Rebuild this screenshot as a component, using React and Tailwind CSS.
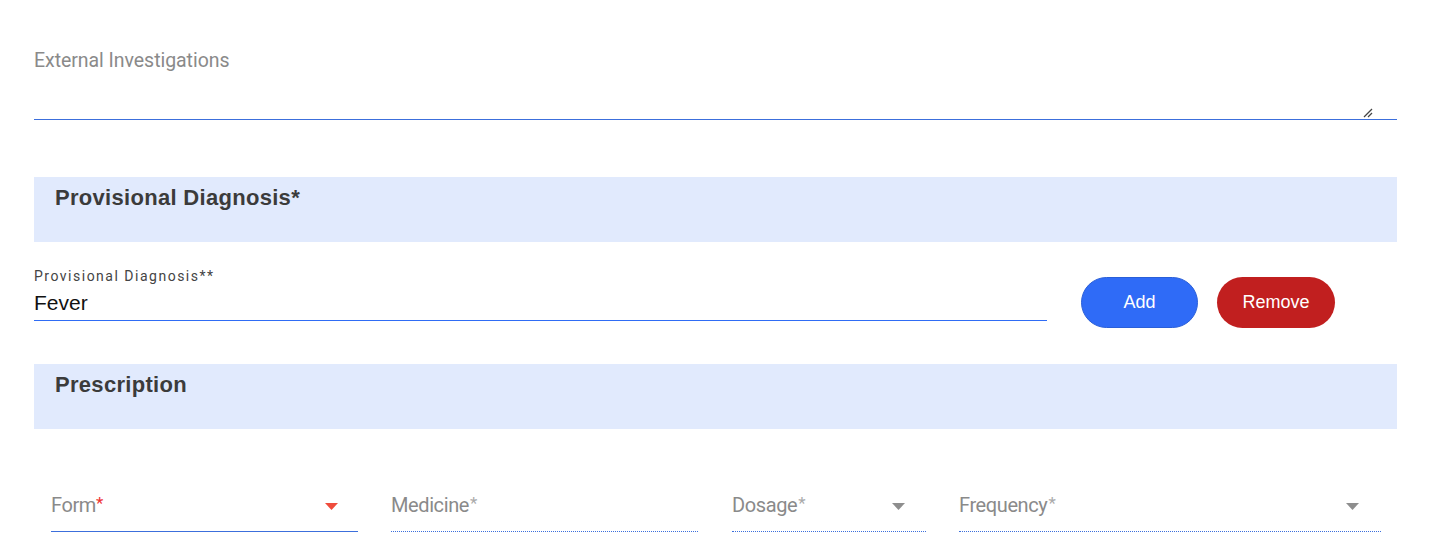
export default function App() {
  const roboto = { fontFamily: 'Roboto, "Liberation Sans", sans-serif' };
  return (
    <div className="w-[1429px] h-[537px] bg-white overflow-hidden" style={{ fontFamily: '"Liberation Sans", Arial, sans-serif' }}>
      <div className="ml-[34px] w-[1363px] pt-[49px]">
        {/* External Investigations */}
        <div className="relative">
          <div className="text-[19.5px] leading-[24px] text-[#8a8a8a] tracking-[-0.05px]" style={roboto}>External Investigations</div>
          <div className="h-[47px] border-b border-[#3c6fdc] relative">
            <svg className="absolute right-[24px] bottom-[1px]" width="10" height="10" viewBox="0 0 10 10">
              <line x1="1" y1="9" x2="9" y2="1" stroke="#444" strokeWidth="1.2" />
              <line x1="5" y1="9" x2="9" y2="5" stroke="#444" strokeWidth="1.2" />
            </svg>
          </div>
        </div>

        {/* Provisional Diagnosis header */}
        <div className="mt-[57px] h-[65px] bg-[#e1eafd] pl-[21px] pt-[8px]">
          <div className="text-[22px] leading-[25px] font-bold text-[#3b3b3b] tracking-[0.3px]">Provisional Diagnosis*</div>
        </div>

        {/* Diagnosis input row */}
        <div className="flex items-start mt-[25px]">
          <div className="w-[1013px]">
            <div className="text-[14px] leading-[18px] text-[#444] tracking-[1.5px]" style={roboto}>Provisional Diagnosis**</div>
            <div className="text-[21px] leading-[24px] text-[#111] mt-[6px] pb-[5px] border-b border-[#2f6cf5]">Fever</div>
          </div>
          <button className="ml-[34px] mt-[10px] w-[117px] h-[51px] rounded-full bg-[#2f6bf7] border border-[#2a5fd8] text-white text-[18px]">Add</button>
          <button className="ml-[19px] mt-[10px] w-[118px] h-[51px] rounded-full bg-[#c11f1f] text-white text-[18px]">Remove</button>
        </div>

        {/* Prescription header */}
        <div className="mt-[36px] h-[65px] bg-[#e1eafd] pl-[21px] pt-[8px]">
          <div className="text-[22px] leading-[25px] font-bold text-[#3b3b3b] tracking-[0.3px]">Prescription</div>
        </div>

        {/* Prescription fields */}
        <div className="flex mt-[64px] pl-[17px]" style={roboto}>
          <div className="w-[307px] h-[39px] border-b border-[#3c6fdc] flex items-start justify-between pr-[20px]">
            <span className="text-[20px] leading-[24px] text-[#8a8a8a] tracking-[-0.4px]">Form<span className="text-[#e33] align-top text-[17px] leading-[20px]">*</span></span>
            <svg className="mt-[10px]" width="13" height="7" viewBox="0 0 13 7"><path d="M0 0 L13 0 L6.5 7 Z" fill="#ef4c3c" /></svg>
          </div>
          <div className="ml-[33px] w-[307px] h-[39px] border-b border-dotted border-[#3c6fdc] flex items-start">
            <span className="text-[20px] leading-[24px] text-[#8a8a8a] tracking-[-0.4px]">Medicine<span className="text-[#aaa] align-top text-[17px] leading-[20px] ml-[1px]">*</span></span>
          </div>
          <div className="ml-[34px] w-[194px] h-[39px] border-b border-dotted border-[#3c6fdc] flex items-start justify-between pr-[21px]">
            <span className="text-[20px] leading-[24px] text-[#8a8a8a] tracking-[-0.4px]">Dosage<span className="text-[#aaa] align-top text-[17px] leading-[20px] ml-[1px]">*</span></span>
            <svg className="mt-[10px]" width="13" height="7" viewBox="0 0 13 7"><path d="M0 0 L13 0 L6.5 7 Z" fill="#8e8e8e" /></svg>
          </div>
          <div className="ml-[33px] w-[422px] h-[39px] border-b border-dotted border-[#3c6fdc] flex items-start justify-between pr-[22px]">
            <span className="text-[20px] leading-[24px] text-[#8a8a8a] tracking-[-0.4px]">Frequency<span className="text-[#aaa] align-top text-[17px] leading-[20px] ml-[1px]">*</span></span>
            <svg className="mt-[10px]" width="13" height="7" viewBox="0 0 13 7"><path d="M0 0 L13 0 L6.5 7 Z" fill="#8e8e8e" /></svg>
          </div>
        </div>
      </div>
    </div>
  );
}
